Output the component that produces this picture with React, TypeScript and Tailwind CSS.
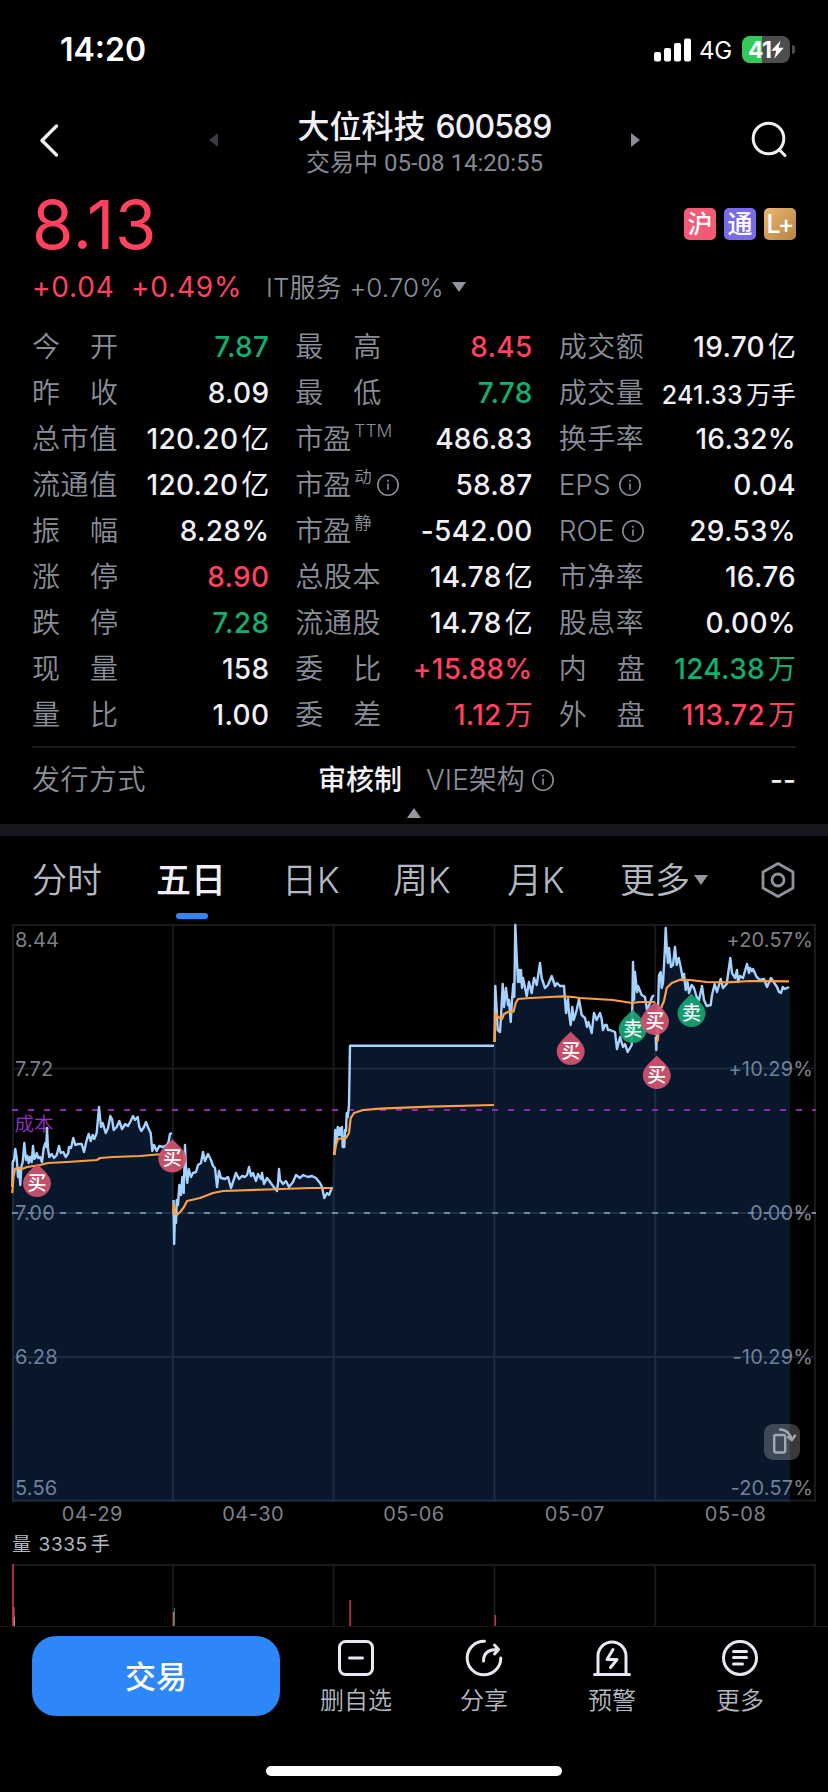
import React from 'react';

type Tone = 'up' | 'down' | 'plain';

interface Stat {
  label: string;
  value: string;
  unit?: string;
  tone?: Tone;
  sup?: string;
  info?: boolean;
  small?: boolean;
}

const toneClass: Record<Tone, string> = {
  up: 'text-[#ff4260]',
  down: 'text-[#12b070]',
  plain: 'text-[#f0f0f6]',
};

const columns: Stat[][] = [
  [
    { label: '今开', value: '7.87', tone: 'down' },
    { label: '昨收', value: '8.09' },
    { label: '总市值', value: '120.20', unit: '亿' },
    { label: '流通值', value: '120.20', unit: '亿' },
    { label: '振幅', value: '8.28%' },
    { label: '涨停', value: '8.90', tone: 'up' },
    { label: '跌停', value: '7.28', tone: 'down' },
    { label: '现量', value: '158' },
    { label: '量比', value: '1.00' },
  ],
  [
    { label: '最高', value: '8.45', tone: 'up' },
    { label: '最低', value: '7.78', tone: 'down' },
    { label: '市盈', sup: 'TTM', value: '486.83' },
    { label: '市盈', sup: '动', info: true, value: '58.87' },
    { label: '市盈', sup: '静', value: '-542.00' },
    { label: '总股本', value: '14.78', unit: '亿' },
    { label: '流通股', value: '14.78', unit: '亿' },
    { label: '委比', value: '+15.88%', tone: 'up' },
    { label: '委差', value: '1.12', unit: '万', tone: 'up' },
  ],
  [
    { label: '成交额', value: '19.70', unit: '亿' },
    { label: '成交量', value: '241.33', unit: '万手', small: true },
    { label: '换手率', value: '16.32%' },
    { label: 'EPS', info: true, value: '0.04' },
    { label: 'ROE', info: true, value: '29.53%' },
    { label: '市净率', value: '16.76' },
    { label: '股息率', value: '0.00%' },
    { label: '内盘', value: '124.38', unit: '万', tone: 'down' },
    { label: '外盘', value: '113.72', unit: '万', tone: 'up' },
  ],
];

// One entry per trading day, in chart coordinates
const priceLines = [
  '12.3,277 12.7,252 14,250 15.3,239 16.7,248 18,267 19,258 20.3,275 21.3,257 22.7,252 24.3,233 26,250 27.3,246 28.7,253 30,247 31.7,252 33,236 34.3,249 36,247 36.7,243 38.3,248 40,247 42,252 43.7,238 45.3,233 46.3,237 47,218 48,239 49.3,247 51.7,244 54,248 56.7,245 59,236 60.7,243 63.3,242 65.7,247 68.3,243 69,237 71,238 73.3,228 75.3,235 78.3,234 81.7,234 84,242 86,233 87,229 88.7,224 90.7,231 92.7,225 94.3,229 96.7,223 99,197 101,217 102.7,213 105.7,223 108,218 110.3,206 112,209 113.7,220 116.7,217 119.3,211 122,219 125.3,214 128,216 130.7,211 133,206 135,210 137.7,207 139.3,217 141.3,221 144,217 146,212 148.3,218 150.7,223 152.3,241 154,235 156.7,241 159.3,236 163,237 165.7,236 168.3,233 170,224 172,223',
  '173.5,290 174.2,334 175,300 176,313 176.7,290 178,295 179.3,275 181,285 182.3,267 183.7,283 185,235 186,260 187.3,273 188.7,259 191,267 193,263 196,262 198,255 201,253 203,242 205,251 208,244 211,250 213,256 215,258 217,277 219,261 221,268 225,269 228,267 231,278 233,272 236,263 239,269 242,266 245,267 247,265 249,257 251,266 253,263 256,271 258,264 261,269 262,263 264,274 267,268 270,272 273,276 277,281 278,273 279,259 280,270 283,274 286,271 289,277 293,272 296,265 300,268 303,265 308,267 312,266 316,268 320,273 322,277 324.3,288 327,283 329,285 331,280 332,277',
  '334.3,245 335.3,220 336.7,230 337.7,217 338.7,225 339.7,218 340.7,225 342,217 342.7,237 344.3,237 345,220 346,221 346.7,203 347.7,207 349,195 350,135.7 494,135.7',
  '494.5,132 495.3,76 496.7,100 497.7,120 500,122 501,107 502.7,74 504,97 506,78 508,95 509,90 510.7,112 512,90 513.3,74 514.3,87 515.3,15 516.7,47 518,72 519,60 520,72 521,60 522,78 523,68 526.7,86 529,72 531.7,83 534,68 536.7,75 540,53 541.7,68 545,78 548,75 551.7,66 555,76 557,73 560,76 564,76 566,103 568,89 569,103 570.7,115 572.3,97 573.7,110 576.7,100 579,89 581.7,105 585,108 587,117 588.5,112 591.7,123 594,103 596.7,110 600,103 601.5,108 603,120 605,115 606.7,115 608,120 610,120 615,122 617,139 620,127 623,137 625,134 627.7,142 631.7,135 633,52 634,90 635,62 637,82 638,76 641.7,85 645,87 647,100 650,93 652,87 654,85',
  '655.7,127 656.3,140 657,117 658,100 659,65 660.7,62 661.7,78 663,73 664.7,43 665.7,18 666.7,37 668,53 669,38 671,57 673,55 675,37 676.7,55 678.7,48 680.7,57 683,70 684,64 685.7,80 687.5,72 689,83 691.7,75 694,78 696.7,87 699,90 702,76 704,90 706.7,96 710.7,95 712,85 714.7,74 717,82 720.7,69 723,78 726.7,74 730.3,48 732,63 735,68 737,60 738,72 740,66 743,68 747,54 749,63 750,58 752,61 753,59 756.7,67 760,70 764,69 767,77 771,68 775,74 777,77 779,82 781,83 782.7,77 785,79 789,77',
];

const averageLines = [
  '12.3,283 13.5,267 15,259 17,258 22,259 27,257 40,255 48,253 67,252 97,250 100,248 113,247 140,246 157,244.5 170,244',
  '173,302 174,294 175,304 177,305 181,301 184,297 187,291 200,288 213,283 223,281 267,279.5 310,278 332.5,278',
  '334.3,245 336,235 338,229 343,228 346,228 349,223 350.7,208 354,203 363,200 380,198.7 430,196.7 494,195',
  '494.5,132 495.7,103 498,107 502,109 504,104 508,102 513.5,101.7 515.7,93 518,89 530,88 550,87 563,86.3 573,87 580,88 613,90 632,93 640,92 655,92',
  '656.3,132 658,130 659,110 661,98 664,91 666.7,78 671.7,73 680,69.7 690,70 706.7,72 727,72.3 750,71 789,71.3',
];

const markers: { x: number; y: number; side: 'buy' | 'sell' }[] = [
  { x: 37, y: 253.5, side: 'buy' },
  { x: 172.3, y: 229, side: 'buy' },
  { x: 570.7, y: 121.5, side: 'buy' },
  { x: 632.7, y: 99.5, side: 'sell' },
  { x: 655, y: 91.5, side: 'buy' },
  { x: 691.5, y: 83.5, side: 'sell' },
  { x: 656.8, y: 145.5, side: 'buy' },
];

const dates = ['04-29', '04-30', '05-06', '05-07', '05-08'];
const dayLines = [172.8, 333.6, 494.4, 655.2];

// The fill runs through all days without gaps
const areaPath = `M12,592 L${priceLines.join(' ').split(' ').join(' L')} L790,77 L790,592 Z`;

const InfoIcon = ({ className = '' }: { className?: string }) => (
  <svg className={`w-6 h-6 shrink-0 ${className}`} viewBox="0 0 24 24" fill="none" stroke="currentColor" strokeWidth={1.6}>
    <circle cx="12" cy="12" r="10.2" />
    <path d="M12 10.5v6.2M12 6.8v2" />
  </svg>
);

const StatusBar = () => (
  <div className="h-[86px] pl-[60px] pr-[33px] flex items-center justify-between text-white">
    <span className="mt-[14px] text-[32px] leading-8 font-semibold">14:20</span>
    <div className="mt-[13px] flex items-center">
      <svg className="w-[38px] h-6" viewBox="0 0 38 24" fill="currentColor">
        <rect x="0" y="14" width="7" height="9.5" rx="2" />
        <rect x="10" y="10" width="7" height="13.5" rx="2" />
        <rect x="20" y="5" width="7" height="18.5" rx="2" />
        <rect x="30" y="0.5" width="7" height="23" rx="2" />
      </svg>
      <span className="ml-[7px] mt-[2px] w-[35px] text-[24px] leading-6 tracking-[-0.2px]">4G</span>
      <div className="ml-2 relative w-12 h-[27px] rounded-[8px] overflow-hidden bg-[#4d4d4f] flex items-center justify-center">
        <div className="absolute left-0 inset-y-0 w-5 bg-[#34c759]" />
        <span className="relative text-[23px] leading-6 font-bold tracking-[-0.8px]">41</span>
        <svg className="relative w-[13px] h-[19px]" viewBox="0 0 12 18" fill="currentColor">
          <path d="M9 0.5 0 10.300h4.800L2.800 17.800 12 7.300H7z" />
        </svg>
      </div>
      <div className="ml-[2px] w-[3px] h-[9px] rounded-r-full bg-[#4d4d4f]" />
    </div>
  </div>
);

const Header = () => (
  <div className="h-[106px] px-[38px] flex items-center">
    <svg className="w-[22px] h-9 mt-[1px]" viewBox="0 0 22 36" fill="none" stroke="#f0f0f6" strokeWidth={3.4} strokeLinecap="round" strokeLinejoin="round">
      <path d="M18.5 4 4 18.500 18.500 33" />
    </svg>
    <svg className="ml-[148px] mt-[2px] w-[11px] h-4" viewBox="0 0 11 16" fill="#3b3c41">
      <path d="M10 1v14L1 8z" />
    </svg>
    <div className="flex-1 flex flex-col items-center mt-[8px]">
      <div className="flex items-center h-10 text-[32px] text-[#f0f0f6] font-medium whitespace-pre">
        大位科技<span className="ml-[10px] tracking-[-0.9px]">600589</span>
      </div>
      <div className="h-8 flex items-center text-[24px] text-[#858994]">
        交易中<span className="ml-[6px] font-['Roboto']">05-08 14:20:55</span>
      </div>
    </div>
    <svg className="mr-[109px] mt-[2px] w-[11px] h-4" viewBox="0 0 11 16" fill="#8a8d98">
      <path d="M1 1v14l9-7z" />
    </svg>
    <svg className="mt-[2px] w-[40px] h-[40px]" viewBox="0 0 40 40" fill="none" stroke="#f0f0f6" strokeWidth={3} strokeLinecap="round">
      <circle cx="18.500" cy="18.500" r="15.300" />
      <path d="M29.800 30.300 35 35.500" />
    </svg>
  </div>
);

const Quote = () => (
  <div className="px-8">
    <div className="flex justify-between h-[64px]">
      <span className="text-[67px] leading-[65px] tracking-[0.800px] text-[#ff4260]">8.13</span>
      <div className="flex gap-2 mt-4 text-white text-[25px] font-medium text-center leading-8">
        <span className="w-8 h-8 rounded-[5px] bg-[#f25a76] flex items-center justify-center">沪</span>
        <span className="w-8 h-8 rounded-[5px] bg-[#7b6be9] flex items-center justify-center">通</span>
        <span className="w-8 h-8 rounded-[5px] bg-linear-to-br from-[#ebb671] to-[#b78443] flex items-center justify-center tracking-[-1px]">L+</span>
      </div>
    </div>
    <div className="-mt-[1px] h-16 flex items-center text-[28px] text-[#ff4260]">
      <span className="w-[99px] tracking-[0.800px]">+0.04</span>
      <span className="w-[135px] tracking-[0.800px]">+0.49%</span>
      <span className="text-[#8d919c] font-[350] text-[26px] tracking-[0.100px]">IT服务 +0.70%</span>
      <svg className="ml-[7px] w-4 h-3" viewBox="0 0 16 12" fill="#9397a2">
        <path d="M1 1h14L8 11z" />
      </svg>
    </div>
  </div>
);

const StatRow = ({ stat }: { stat: Stat }) => {
  const spread = stat.label.length === 2 && !stat.sup;
  return (
    <div className="h-[46px] flex items-center justify-between">
      <div className="flex items-center text-[28px] font-[350] text-[#8a8e99]">
        {spread ? (
          <span className="w-[86px] flex justify-between">
            <span>{stat.label[0]}</span>
            <span>{stat.label[1]}</span>
          </span>
        ) : (
          <span className={stat.label.length === 3 && !stat.info ? 'tracking-[0.600px]' : ''}>{stat.label}</span>
        )}
        {stat.sup && <span className="ml-[3px] -mt-4 text-[17.5px]">{stat.sup}</span>}
        {stat.info && <InfoIcon className={stat.sup ? 'ml-1' : 'ml-[7px]'} />}
      </div>
      <div className={`flex items-center font-medium ${stat.small ? 'text-[25px] mt-[6px]' : 'text-[28px]'} ${toneClass[stat.tone ?? 'plain']}`}>
        <span className="tracking-[0.300px]">{stat.value}</span>
        {stat.unit && <span className="ml-[3px] font-normal">{stat.unit}</span>}
      </div>
    </div>
  );
};

const Tabs = () => (
  <div className="h-[84px] px-8 pt-[3px] flex items-center text-[35px] leading-[50px] font-[350] text-[#b4b8c2]">
    <span className="w-[124px]">分时</span>
    <span className="w-[126px] font-medium text-[#f0f0f6]">
      <span className="relative">
        五日
        <i className="absolute left-1/2 -ml-[15px] top-[54px] w-8 h-[6px] rounded-full bg-[#2e87f8]" />
      </span>
    </span>
    <span className="w-[111px]">日K</span>
    <span className="w-[114px]">周K</span>
    <span className="w-[113px]">月K</span>
    <span className="flex items-center">
      更多
      <svg className="ml-[3px] w-4 h-3" viewBox="0 0 16 12" fill="#9397a2">
        <path d="M1 1h14L8 11z" />
      </svg>
    </span>
    <svg className="ml-auto w-9 h-[38px]" viewBox="0 0 36 38" fill="none" stroke="#8f939e" strokeWidth={2.8} strokeLinejoin="round">
      <path d="M18 2.500 33 11v16L18 35.500 3 27V11z" />
      <circle cx="18" cy="19" r="6" />
    </svg>
  </div>
);

const Marker = ({ x, y, side }: { x: number; y: number; side: 'buy' | 'sell' }) => (
  <g transform={`translate(${x} ${y})`}>
    <path d="M0 0C3 4 14 11 14 19.500A14 14 0 0 1-14 19.500C-14 11-3 4 0 0z" fill={side === 'buy' ? '#d45570' : '#17a673'} fillOpacity={0.92} />
    <text x="0" y="26" textAnchor="middle" fontSize="19" fontWeight={500} fill="#fff">
      {side === 'buy' ? '买' : '卖'}
    </text>
  </g>
);

const PriceChart = () => (
  <div className="relative h-[582px]">
    <svg className="block w-[828px] h-[582px]" viewBox="0 10 828 582">
      {/* Grid */}
      <g stroke="#191a1f" strokeWidth={2} fill="none">
        <rect x="13" y="15" width="802" height="575.500" />
        {dayLines.map(x => <path key={x} d={`M${x} 15V590`} />)}
        <path d="M13 158.500H815M13 303H815M13 447H815" />
      </g>
      <path d="M12 303H816" stroke="#7886a0" strokeWidth={2} strokeDasharray="6 10" />
      {/* Axis labels */}
      <g fontSize="20" fill="#7d808a" letterSpacing="0.15">
        <text x="15" y="37">8.44</text>
        <text x="15" y="165.500">7.72</text>
        <text x="15" y="310">7.00</text>
        <text x="15" y="454">6.28</text>
        <text x="15" y="585">5.56</text>
        <g textAnchor="end">
          <text x="813" y="37">+20.57%</text>
          <text x="813" y="165.500">+10.29%</text>
          <text x="813" y="310">0.00%</text>
          <text x="813" y="454">-10.29%</text>
          <text x="813" y="585">-20.57%</text>
        </g>
      </g>
      <text x="14.500" y="221" fontSize="19.500" fontWeight={350} fill="#9a30c8">成本</text>
      {/* Price area */}
      <path d={areaPath} fill="#2e87f8" fillOpacity={0.17} />
      <path d="M12 200H816" stroke="#8a2ab5" strokeWidth={2} strokeDasharray="6 10" />
      <g fill="none" stroke="#a5d2ff" strokeWidth={2.4} strokeLinejoin="round">
        {priceLines.map(points => <polyline key={points} points={points} />)}
      </g>
      <g fill="none" stroke="#ff9f43" strokeWidth={2.2} strokeLinejoin="round">
        {averageLines.map(points => <polyline key={points} points={points} />)}
      </g>
      {markers.map(m => <Marker key={`${m.x}-${m.y}`} {...m} />)}
    </svg>
    <button className="absolute left-[764px] top-[504px] w-9 h-9 rounded-[9px] bg-white/22 flex items-center justify-center">
      <svg className="w-9 h-9" viewBox="0 0 36 36" fill="none" stroke="#a3a7ae" strokeWidth={2.400} strokeLinecap="round" strokeLinejoin="round">
        <rect x="10.200" y="11" width="11" height="17.500" rx="2" />
        <path d="M16 5.500c6 0 10.500 4.500 12 10.500M31 11.500 28 16.200 24 13" />
      </svg>
    </button>
  </div>
);

const VolumeChart = () => (
  <svg className="block w-[828px] h-[62px]" viewBox="0 0 828 62" fill="none">
    <path d="M13 62V1H815V62" stroke="#191a1f" strokeWidth={2} />
    {dayLines.map(x => <path key={x} d={`M${x} 1V62`} stroke="#191a1f" strokeWidth={2} />)}
    <path d="M13 0V62" stroke="#a82f43" strokeWidth={2} />
    <path d="M14 43V62" stroke="#e0566c" />
    <path d="M14.500 53V62" stroke="#9a9a90" />
    <path d="M174.500 44V62" stroke="#128f60" />
    <path d="M173.500 48V62" stroke="#c95a68" strokeWidth={1.500} />
    <path d="M350.200 36V62" stroke="#a82f43" strokeWidth={2} />
    <path d="M495.200 51V62" stroke="#c2384e" strokeWidth={1.500} />
  </svg>
);

const BottomAction = ({ label, children }: { label: string; children: React.ReactNode }) => (
  <button className="w-[128px] flex flex-col items-center text-[24px] font-[350] text-[#b4b8c2]">
    <svg className="w-10 h-10" viewBox="0 0 40 40" fill="none" stroke="#e6e8f2" strokeWidth={3} strokeLinecap="round" strokeLinejoin="round">
      {children}
    </svg>
    <span className="mt-[6px] leading-[34px]">{label}</span>
  </button>
);

const BottomBar = () => (
  <div className="border-t border-[#191a1f] h-[165px] relative">
    <div className="pl-8 pt-[9px] flex">
      <button className="w-[248px] h-20 pt-[2px] rounded-[24px] bg-[#2e87f8] text-white text-[31px] font-medium">交易</button>
      <div className="ml-[12px] pt-[2px] flex">
        <BottomAction label="删自选">
          <rect x="3.500" y="3.500" width="33" height="33" rx="6" />
          <path d="M13.500 20h13" />
        </BottomAction>
        <BottomAction label="分享">
          <path d="M20.500 3.200A16.800 16.800 0 1 0 36.800 20" />
          <path d="M19.500 23C19.500 15.500 24 11.500 33 11.500M30.500 7 34.500 11.500 30.500 16" />
        </BottomAction>
        <BottomAction label="预警">
          <path d="M2.500 36.500h35M6 36V18a14 14 0 0 1 28 0v18" />
          <path d="M21 11.500 15 21.500h10L18.500 29.500" />
        </BottomAction>
        <BottomAction label="更多">
          <circle cx="20" cy="20" r="16.500" />
          <path d="M13.500 13.500h13M13.500 19.500h13M13.500 26h9" />
        </BottomAction>
      </div>
    </div>
    <div className="absolute left-[266px] bottom-[15px] w-[296px] h-[10px] rounded-full bg-white" />
  </div>
);

export default function App() {
  return (
    <div className="w-[828px] h-[1792px] overflow-hidden bg-black flex flex-col font-['Inter','Noto_Sans_CJK_SC',sans-serif]">
      <StatusBar />
      <Header />
      <Quote />
      <div className="px-8 mt-[5px] grid grid-cols-3 gap-x-[26px]">
        {columns.map((column, i) => (
          <div key={i}>
            {column.map(stat => <StatRow key={stat.label + (stat.sup ?? '')} stat={stat} />)}
          </div>
        ))}
      </div>
      <div className="mx-8 mt-2 border-t-2 border-[#191a1f] h-[62px] pt-[3px] flex items-center text-[28px]">
        <span className="font-[350] text-[#8a8e99] tracking-[0.500px]">发行方式</span>
        <span className="flex-1 text-right font-medium text-[#f0f0f6]">审核制</span>
        <span className="ml-6 w-[370px] flex items-center font-[350] text-[#8a8e99]">
          VIE架构<InfoIcon className="ml-[6px]" />
          <span className="ml-auto font-medium text-[#f0f0f6]">--</span>
        </span>
      </div>
      <div className="h-4 flex justify-center">
        <svg className="w-4 h-[10px]" viewBox="0 0 16 10" fill="#9397a2">
          <path d="M8 0 15 10H1z" />
        </svg>
      </div>
      <div className="h-3 bg-[#17181d]" />
      <Tabs />
      <PriceChart />
      <div className="px-3 h-[22px] flex text-[20px] leading-6 text-[#7d808a] tracking-[0.500px]">
        {dates.map(date => <span key={date} className="flex-1 text-center">{date}</span>)}
      </div>
      <div className="pl-3 pt-[2px] h-[40px] flex items-center text-[19px] text-[#b4b8c2] tracking-[0.600px]">
        <span>量</span>
        <span className="ml-[7px]">3335</span>
        <span className="ml-[3px]">手</span>
      </div>
      <VolumeChart />
      <BottomBar />
    </div>
  );
}
